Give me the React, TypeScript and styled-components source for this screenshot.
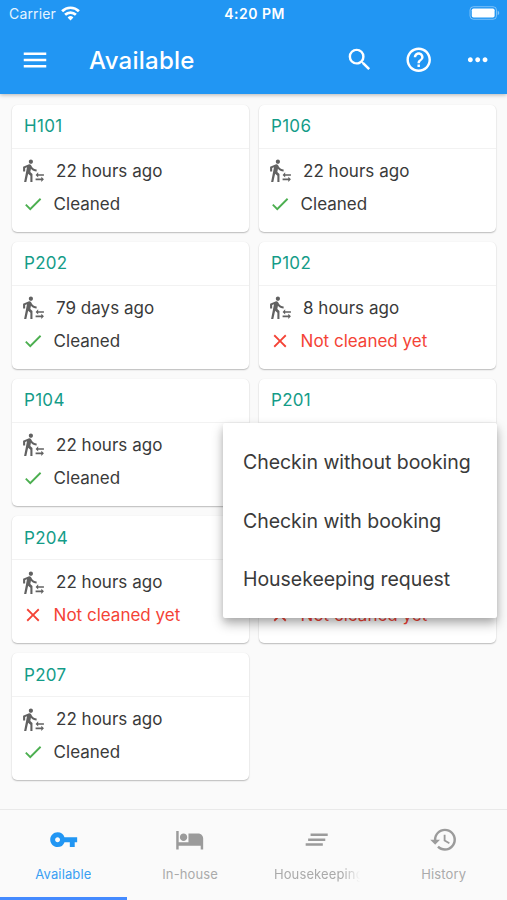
import React from 'react';
import styled, { createGlobalStyle } from 'styled-components';
import {
  MdCheck, MdClearAll, MdClose, MdHelpOutline, MdHistory, MdHotel, MdMenu,
  MdMoreHoriz, MdSearch, MdTransferWithinAStation, MdVpnKey,
} from 'react-icons/md';

const GlobalStyle = createGlobalStyle`
  * { box-sizing: border-box; }
  body { margin: 0; background: #fafafa; font-family: Inter, "Liberation Sans", sans-serif; color: #3a3a3a; }
  svg { display: block; flex: none; }
`;

const Screen = styled.main`
  position: relative;
  display: flex;
  flex-direction: column;
  width: 507px;
  height: 900px;
  overflow: hidden;
  background: #fafafa;
`;

const Header = styled.header`
  flex: none;
  height: 94px;
  color: #fff;
  background: #2196f3;
  box-shadow: 0 1px 4px rgba(0, 0, 0, 0.28);
`;

const StatusBar = styled.div`
  display: grid;
  grid-template-columns: 1fr auto 1fr;
  align-items: center;
  height: 27px;
  padding: 0 7px 0 9px;
`;

const Carrier = styled.div`
  display: flex;
  align-items: center;
  gap: 5.5px;
  font-size: 14px;
  letter-spacing: 0.15px;
  color: #e6f4ff;
`;

const Time = styled.div`
  font-size: 14px;
  font-weight: 600;
  letter-spacing: 0.5px;
`;

const BatterySlot = styled.div`
  display: flex;
  justify-content: flex-end;
  padding-bottom: 1px;
`;

const AppBar = styled.div`
  display: flex;
  align-items: center;
  height: 66px;
  padding: 0 14.5px 0 20px;
`;

const Title = styled.h1`
  flex: 1;
  margin: 0 0 0 39px;
  font-size: 24px;
  font-weight: 500;
  letter-spacing: 0.25px;
`;

const Actions = styled.div`
  display: flex;
  gap: 29.5px;
`;

const Rooms = styled.section`
  flex: 1;
  display: grid;
  grid-template-columns: 237px 237px;
  grid-auto-rows: 127.5px;
  align-content: start;
  gap: 9.6px 10px;
  padding: 10.5px 12px 0;
`;

const Card = styled.article`
  border-radius: 5px;
  background: #fff;
  box-shadow: 0 1px 1.5px rgba(0, 0, 0, 0.25), 0 0 1px rgba(0, 0, 0, 0.08);
`;

const RoomName = styled.h2`
  display: flex;
  align-items: center;
  height: 44.5px;
  margin: 0;
  padding: 0 12px;
  border-bottom: 1px solid #f2f2f2;
  font-size: 17px;
  font-weight: 400;
  letter-spacing: 0.3px;
  color: #149c88;
`;

const Details = styled.div`
  padding: 5.3px 9px 0;
`;

const Vacated = styled.div`
  display: flex;
  align-items: center;
  gap: 10px;
  height: 33px;
  font-size: 17px;
  letter-spacing: 0.02px;

  svg { color: #616161; }
`;

const Cleaning = styled.div<{ $clean: boolean }>`
  display: flex;
  align-items: center;
  gap: 10px;
  height: 33px;
  padding-left: 0.6px;
  font-size: 17px;
  letter-spacing: 0;
  color: ${({ $clean }) => ($clean ? '#3a3a3a' : '#f44336')};

  svg { color: ${({ $clean }) => ($clean ? '#4caf50' : '#f44336')}; }
`;

const Menu = styled.div`
  position: absolute;
  left: 223px;
  top: 423px;
  width: 274px;
  height: 195px;
  padding: 10px 0;
  border-radius: 2px;
  background: #fff;
  box-shadow: 0 6px 12px rgba(0, 0, 0, 0.28), 0 3px 6px rgba(0, 0, 0, 0.1);
`;

const MenuItem = styled.div`
  display: flex;
  align-items: center;
  height: 58.6px;
  padding-left: 20px;
  font-size: 19.5px;
  letter-spacing: -0.04px;
  white-space: nowrap;
`;

const Tabs = styled.nav`
  flex: none;
  display: grid;
  grid-template-columns: repeat(4, 1fr);
  height: 91px;
  border-top: 1px solid #e9e9e9;
`;

const Tab = styled.div<{ $active?: boolean }>`
  display: flex;
  flex-direction: column;
  align-items: center;
  gap: 11px;
  padding: 15px 20px 0;
  border-bottom: 3px solid ${({ $active }) => ($active ? '#448aff' : 'transparent')};
  color: ${({ $active }) => ($active ? '#2196f3' : '#9b9b9b')};
`;

const TabLabel = styled.span<{ $fade?: boolean; $active?: boolean }>`
  max-width: 86px;
  overflow: hidden;
  white-space: nowrap;
  font-size: 13px;
  line-height: 18px;
  letter-spacing: 0.13px;
  color: ${({ $active }) => ($active ? '#3a9ff3' : '#aaa')};
  mask-image: ${({ $fade }) => ($fade ? 'linear-gradient(to right, #000 80%, transparent)' : 'none')};
`;

const rooms = [
  { name: 'H101', vacated: '22 hours ago', clean: true },
  { name: 'P106', vacated: '22 hours ago', clean: true },
  { name: 'P202', vacated: '79 days ago', clean: true },
  { name: 'P102', vacated: '8 hours ago', clean: false },
  { name: 'P104', vacated: '22 hours ago', clean: true },
  { name: 'P201', vacated: '22 hours ago', clean: true },
  { name: 'P204', vacated: '22 hours ago', clean: false },
  { name: 'P206', vacated: '22 hours ago', clean: false },
  { name: 'P207', vacated: '22 hours ago', clean: true },
];

const tabs = [
  { label: 'Available', Icon: MdVpnKey, active: true },
  { label: 'In-house', Icon: MdHotel },
  { label: 'Housekeeping', Icon: MdClearAll, fade: true },
  { label: 'History', Icon: MdHistory },
];

function Wifi() {
  return (
    <svg width="19" height="15" viewBox="0 0 19 15" fill="none" stroke="#fff" strokeWidth="2.7">
      <path d="M1.1 5.2a12 12 0 0 1 16.8 0M4.1 8.8a7.8 7.8 0 0 1 10.8 0" />
      <path d="M9.5 14.4 6.6 11.5a4.2 4.2 0 0 1 5.8 0Z" fill="#fff" stroke="none" />
    </svg>
  );
}

function Battery() {
  return (
    <svg width="31" height="14" viewBox="0 0 31 14">
      <rect x="1" y="0.7" width="26.5" height="12.6" rx="3.5" fill="none" stroke="#fff" strokeOpacity="0.4" />
      <rect x="2.8" y="2.5" width="22.8" height="9" rx="1.7" fill="#fff" />
      <path d="M28.7 4.8c2 .7 2 3.7 0 4.4Z" fill="#fff" fillOpacity="0.45" />
    </svg>
  );
}

export default function App() {
  return (
    <>
      <GlobalStyle />
      <Screen>
        <Header>
          <StatusBar>
            <Carrier>Carrier <Wifi /></Carrier>
            <Time>4:20 PM</Time>
            <BatterySlot><Battery /></BatterySlot>
          </StatusBar>
          <AppBar>
            <MdMenu size={30} />
            <Title>Available</Title>
            <Actions>
              <MdSearch size={29.4} />
              <MdHelpOutline size={29.4} />
              <MdMoreHoriz size={29.4} />
            </Actions>
          </AppBar>
        </Header>
        <Rooms>
          {rooms.map((room) => (
            <Card key={room.name}>
              <RoomName>{room.name}</RoomName>
              <Details>
                <Vacated><MdTransferWithinAStation size={25} />{room.vacated}</Vacated>
                <Cleaning $clean={room.clean}>
                  {room.clean ? <MdCheck size={22} /> : <MdClose size={22} />}
                  {room.clean ? 'Cleaned' : 'Not cleaned yet'}
                </Cleaning>
              </Details>
            </Card>
          ))}
        </Rooms>
        <Tabs>
          {tabs.map(({ label, Icon, active, fade }) => (
            <Tab key={label} $active={active}>
              <Icon size={29.4} />
              <TabLabel $active={active} $fade={fade}>{label}</TabLabel>
            </Tab>
          ))}
        </Tabs>
        <Menu>
          <MenuItem>Checkin without booking</MenuItem>
          <MenuItem>Checkin with booking</MenuItem>
          <MenuItem>Housekeeping request</MenuItem>
        </Menu>
      </Screen>
    </>
  );
}
